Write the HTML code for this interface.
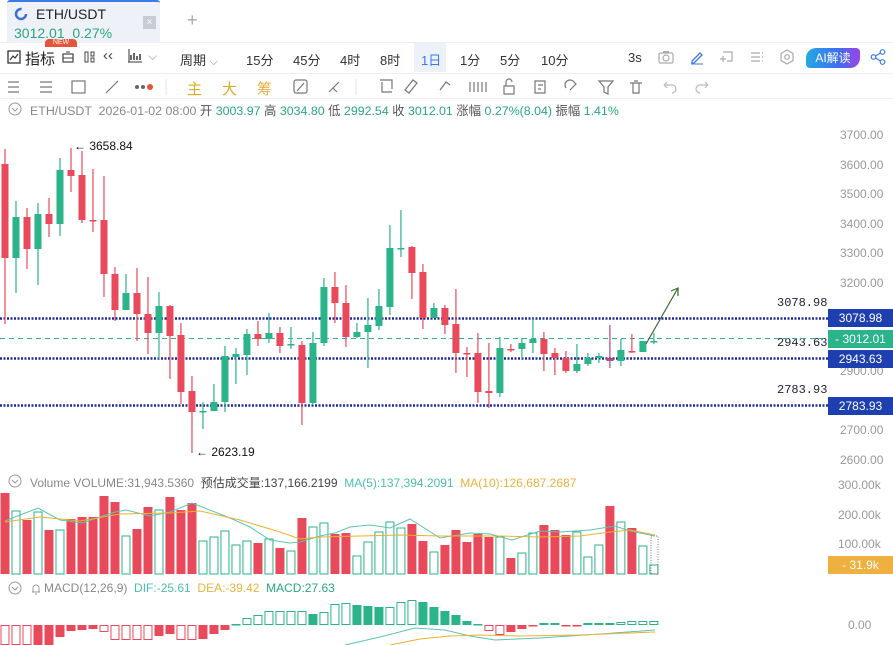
<!DOCTYPE html>
<html><head><meta charset="utf-8">
<style>
*{margin:0;padding:0;box-sizing:border-box}
body{width:893px;height:645px;overflow:hidden;background:#fff;font-family:"Liberation Sans","Noto Sans CJK SC",sans-serif;position:relative;color:#333}
.abs{position:absolute;white-space:nowrap}
.tab{position:absolute;left:7px;top:0;width:153px;height:42px;background:#eef2f8;border-top:2px solid #3b7be8;border-radius:3px 3px 0 0}
.t{font-size:13px;color:#333}
.g{color:#2aa77e}
.r{color:#e24a58}
.gr{color:#999}
.sm{font-size:12px}
</style></head><body>
<div class="tab"></div>
<svg class="abs" style="left:14px;top:7px" width="14" height="14" viewBox="0 0 14 14"><circle cx="7" cy="7" r="5" fill="none" stroke="#3b6fe0" stroke-width="2.5" stroke-dasharray="24 8"/></svg>
<div class="abs t" style="left:36px;top:6px;font-size:14px;color:#222">ETH/USDT</div>
<div class="abs" style="left:14px;top:25px;font-size:14px;color:#2aa77e">3012.01&nbsp; 0.27%</div>
<div class="abs" style="left:143px;top:16px;width:13px;height:13px;background:#c9ccd2;color:#fff;font-size:10px;text-align:center;line-height:13px">×</div>
<div class="abs" style="left:187px;top:10px;font-size:18px;color:#aaa;font-weight:300">+</div>
<div class="abs" style="left:0;top:42px;width:893px;height:1px;background:#eceef1"></div>
<div class="abs" style="left:45px;top:39px;width:32px;height:8px;background:#e8543a;border-radius:4px 4px 0 0;color:#fff;font-size:7px;text-align:center;line-height:8px">NEW</div>
<!-- toolbar 1 -->
<svg class="abs" style="left:7px;top:50px" width="14" height="14"><rect x="1" y="1" width="12" height="12" fill="none" stroke="#333" stroke-width="1.3"/><polyline points="3,10 6,6 8,8 11,4" fill="none" stroke="#333" stroke-width="1.2"/></svg>
<div class="abs" style="left:25px;top:48px;font-size:15px;color:#222">指标</div>
<svg class="abs" style="left:61px;top:50px" width="14" height="14"><rect x="2" y="4" width="10" height="8" fill="none" stroke="#444" stroke-width="1.2"/><line x1="2" y1="8" x2="12" y2="8" stroke="#444"/><line x1="5" y1="2" x2="9" y2="2" stroke="#444"/></svg>
<svg class="abs" style="left:84px;top:50px" width="12" height="14"><rect x="1" y="2" width="3" height="10" fill="none" stroke="#444"/><rect x="7" y="2" width="3" height="4" fill="none" stroke="#444"/><rect x="7" y="8" width="3" height="4" fill="none" stroke="#444"/></svg>
<div class="abs" style="left:103px;top:47px;font-size:15px;color:#444">‹‹</div>
<svg class="abs" style="left:127px;top:48px" width="16" height="16"><line x1="2" y1="1" x2="2" y2="14" stroke="#333"/><line x1="1" y1="14" x2="15" y2="14" stroke="#333"/><path d="M4 12V7M7 12V5M10 12V8M13 12V6" stroke="#333" stroke-width="1.5"/></svg>
<div class="abs gr" style="left:148px;top:49px;font-size:12px">⌵</div>
<div class="abs t" style="left:180px;top:50px">周期 <span style="color:#888;font-size:11px">⌵</span></div>
<div class="abs t" style="left:246px;top:50px">15分</div>
<div class="abs t" style="left:293px;top:50px">45分</div>
<div class="abs t" style="left:340px;top:50px">4时</div>
<div class="abs t" style="left:380px;top:50px">8时</div>
<div class="abs" style="left:414px;top:43px;width:32px;height:29px;background:#edf2f9"></div>
<div class="abs t" style="left:421px;top:50px;color:#3b7be8">1日</div>
<div class="abs t" style="left:460px;top:50px">1分</div>
<div class="abs t" style="left:500px;top:50px">5分</div>
<div class="abs t" style="left:541px;top:50px">10分</div>
<div class="abs t" style="left:628px;top:50px">3s</div>
<svg class="abs" style="left:658px;top:50px" width="16" height="14"><rect x="1" y="3" width="14" height="10" rx="1.5" fill="none" stroke="#aaa" stroke-width="1.2"/><circle cx="8" cy="8" r="3" fill="none" stroke="#aaa" stroke-width="1.2"/><rect x="5" y="1" width="6" height="2" fill="#aaa"/></svg>
<svg class="abs" style="left:689px;top:49px" width="16" height="16"><path d="M3 12L11 4l2 2-8 8H3z" fill="none" stroke="#3b7be8" stroke-width="1.3"/><line x1="2" y1="15" x2="14" y2="15" stroke="#3b7be8"/></svg>
<svg class="abs" style="left:719px;top:50px" width="14" height="14"><path d="M4 2h9v9H8M1 9h6M4 6v6" fill="none" stroke="#aaa" stroke-width="1.2"/></svg>
<svg class="abs" style="left:750px;top:51px" width="14" height="12"><path d="M1 2h9M1 6h9M1 10h9M12 2h1M12 6h1M12 10h1" stroke="#aaa" stroke-width="1.2"/></svg>
<svg class="abs" style="left:779px;top:49px" width="16" height="16"><polygon points="8,1 14,4.5 14,11.5 8,15 2,11.5 2,4.5" fill="none" stroke="#aaa" stroke-width="1.2"/><circle cx="8" cy="8" r="2.3" fill="none" stroke="#aaa" stroke-width="1.2"/></svg>
<div class="abs" style="left:806px;top:48px;width:54px;height:20px;border-radius:10px 4px 10px 4px;background:linear-gradient(90deg,#25a8e0,#3c6ef0 60%,#9d43e6);color:#fff;font-size:12px;text-align:center;line-height:20px">AI解读</div>
<svg class="abs" style="left:870px;top:49px" width="16" height="16"><circle cx="3.5" cy="8" r="2.3" fill="none" stroke="#3b7be8" stroke-width="1.2"/><circle cx="12.5" cy="3" r="2.3" fill="none" stroke="#3b7be8" stroke-width="1.2"/><circle cx="12.5" cy="13" r="2.3" fill="none" stroke="#3b7be8" stroke-width="1.2"/><path d="M5.5 7l5-3M5.5 9l5 3" stroke="#3b7be8" stroke-width="1.2"/></svg>
<div class="abs" style="left:0;top:73px;width:893px;height:1px;background:#eceef1"></div>
<!-- toolbar 2 -->
<svg class="abs" style="left:0;top:76px" width="893" height="22">
<g stroke="#777" stroke-width="1.2" fill="none">
<path d="M8 6h11M8 11h11M8 16h11"/><path d="M40 6h12M40 11h12M40 16h12"/>
<rect x="72" y="5" width="13" height="12"/>
<path d="M106 17l12-12"/>
<path d="M382 6v10h10M380 4h12v9"/><path d="M405 14l8-10 4 3-8 10z"/><path d="M440 14l6-8 4 3"/>
<path d="M470 6v10M474 6v10M478 6v10M482 6v10M486 6v10"/>
<path d="M504 10h10v8h-10zM506 10V6a3 3 0 0 1 6 0"/>
<path d="M535 5h10v12h-10zM538 9h5M538 13h3"/>
<path d="M566 12a5 5 0 0 1 8-6l2 2-6 6"/>
<path d="M599 5h14l-5 6v7l-4-2v-5z"/>
<path d="M630 7h12M633 7v10h6V7M634 5h4"/>
</g>
<g stroke="#bbb" stroke-width="1.2" fill="none"><path d="M664 9h8a4 4 0 0 1 0 8M664 9l3-3M664 9l3 3"/><path d="M708 9h-8a4 4 0 0 0 0 8M708 9l-3-3M708 9l-3 3"/></g>
<circle cx="137" cy="11" r="2" fill="#666"/><circle cx="143" cy="11" r="2" fill="#666"/><circle cx="150" cy="11" r="3" fill="#e8543a"/>
<line x1="166" y1="3" x2="166" y2="19" stroke="#e5e5e5"/><line x1="356" y1="3" x2="356" y2="19" stroke="#e5e5e5"/>
<rect x="294" y="4" width="13" height="13" rx="2" fill="none" stroke="#777" stroke-width="1.2"/><path d="M297 15l7-8" stroke="#777" stroke-width="1.2"/><path d="M329 16l10-10M333 12l4 4" stroke="#777" stroke-width="1.2"/>
</svg>
<div class="abs" style="left:187px;top:78px;font-size:15px;color:#d9ab2a">主</div>
<div class="abs" style="left:222px;top:78px;font-size:15px;color:#d9ab2a">大</div>
<div class="abs" style="left:257px;top:78px;font-size:15px;color:#e6b447">筹</div>
<div class="abs" style="left:0;top:98px;width:893px;height:1px;background:#eceef1"></div>
<!-- info row -->
<svg class="abs" style="left:8px;top:102px" width="14" height="14"><circle cx="7" cy="7" r="6" fill="none" stroke="#999"/><path d="M4 6l3 3 3-3" fill="none" stroke="#999"/></svg>
<div class="abs" style="left:30px;top:101px;color:#888;font-size:12.4px">ETH/USDT &nbsp;2026-01-02 08:00 <span style="color:#555">开</span> <span class="g">3003.97</span> <span style="color:#555">高</span> <span class="g">3034.80</span> <span style="color:#555">低</span> <span class="g">2992.54</span> <span style="color:#555">收</span> <span class="g">3012.01</span> <span style="color:#555">涨幅</span> <span class="g">0.27%(8.04)</span> <span style="color:#555">振幅</span> <span class="g">1.41%</span></div>
<!-- volume header -->
<svg class="abs" style="left:8px;top:474px" width="14" height="14"><circle cx="7" cy="7" r="6" fill="none" stroke="#999"/><path d="M4 6l3 3 3-3" fill="none" stroke="#999"/></svg>
<div class="abs sm" style="left:30px;top:474px;color:#888">Volume VOLUME:31,943.5360 &nbsp;<span style="color:#444">预估成交量:137,166.2199</span> &nbsp;<span style="color:#4cc0b0">MA(5):137,394.2091</span> &nbsp;<span style="color:#e8b53a">MA(10):126,687.2687</span></div>
<svg class="abs" style="left:8px;top:581px" width="14" height="14"><circle cx="7" cy="7" r="6" fill="none" stroke="#999"/><path d="M4 6l3 3 3-3" fill="none" stroke="#999"/></svg>
<svg class="abs" style="left:30px;top:582px" width="12" height="13"><path d="M2 10h8M3 10V6a3 3 0 0 1 6 0v4M5 12h2" fill="none" stroke="#999"/></svg>
<div class="abs sm" style="left:44px;top:581px;color:#888">MACD(12,26,9) &nbsp;<span style="color:#4cc0b0">DIF:-25.61</span> &nbsp;<span style="color:#e8b53a">DEA:-39.42</span> &nbsp;<span class="g">MACD:27.63</span></div>
<!-- axis labels -->
<div class="abs sm gr" style="left:840px;top:128px">3700.00</div>
<div class="abs sm gr" style="left:840px;top:158px">3600.00</div>
<div class="abs sm gr" style="left:840px;top:187px">3500.00</div>
<div class="abs sm gr" style="left:840px;top:217px">3400.00</div>
<div class="abs sm gr" style="left:840px;top:246px">3300.00</div>
<div class="abs sm gr" style="left:840px;top:276px">3200.00</div>
<div class="abs sm gr" style="left:840px;top:364px">2900.00</div>
<div class="abs sm gr" style="left:840px;top:423px">2700.00</div>
<div class="abs sm gr" style="left:840px;top:453px">2600.00</div>
<div class="abs sm gr" style="left:838px;top:478px">300.00k</div>
<div class="abs sm gr" style="left:838px;top:508px">200.00k</div>
<div class="abs sm gr" style="left:838px;top:537px">100.00k</div>
<div class="abs sm" style="left:828px;top:556px;width:65px;height:18px;background:#f0b040;color:#fff;line-height:18px;text-align:center">- 31.9k</div>
<div class="abs sm gr" style="left:848px;top:618px">0.00</div>
<div class="abs" style="left:828px;top:309px;width:65px;height:18px;background:#1e3fb0;color:#fff;font-size:12px;line-height:18px;text-align:center">3078.98</div>
<div class="abs" style="left:828px;top:330px;width:65px;height:18px;background:#2bb38a;color:#fff;font-size:12px;line-height:18px;text-align:center">- 3012.01</div>
<div class="abs" style="left:828px;top:350px;width:65px;height:18px;background:#1e3fb0;color:#fff;font-size:12px;line-height:18px;text-align:center">2943.63</div>
<div class="abs" style="left:828px;top:397px;width:65px;height:18px;background:#1e3fb0;color:#fff;font-size:12px;line-height:18px;text-align:center">2783.93</div>
<div class="abs" style="left:777px;top:296px;font-family:'Liberation Mono',monospace;font-size:12px;color:#223">3078.98</div>
<div class="abs" style="left:777px;top:336px;font-family:'Liberation Mono',monospace;font-size:12px;color:#223">2943.63</div>
<div class="abs" style="left:777px;top:383px;font-family:'Liberation Mono',monospace;font-size:12px;color:#223">2783.93</div>
<div class="abs" style="left:74px;top:139px;font-size:12px;color:#111">← 3658.84</div>
<div class="abs" style="left:196px;top:445px;font-size:12px;color:#111">← 2623.19</div>
<svg id="ch" class="abs" style="left:0;top:0" width="828" height="645"></svg>
<script>
var C=[[164,258,149,324,0],[258,217,201,293,1],[217,249,208,269,0],[249,214,203,285,1],[214,224,198,237,0],[224,170,158,236,1],[170,176,148,192,0],[175,220,151,223,0],[220,220,169,232,0],[220,274,176,297,0],[274,310,267,321,0],[310,293,274,310,1],[293,314,268,341,0],[314,333,277,354,0],[333,306,292,359,1],[306,336,305,379,0],[335,392,323,404,0],[391,412,376,453,0],[411,411,402,429,1],[411,402,384,411,1],[402,356,346,412,1],[357,354,348,384,1],[355,334,329,375,1],[334,339,321,346,0],[339,333,313,343,1],[333,346,327,353,0],[344,344,327,349,1],[345,403,341,425,0],[403,343,332,405,1],[343,287,278,346,1],[287,303,272,323,0],[303,337,285,347,0],[337,332,323,338,1],[332,325,298,368,1],[326,306,289,330,1],[307,248,225,315,1],[248,248,210,257,1],[247,273,246,299,0],[272,318,264,329,0],[318,308,303,318,1],[308,325,305,334,0],[324,353,289,373,0],[353,353,347,377,0],[353,392,333,403,0],[391,393,343,408,0],[393,348,337,397,1],[349,349,344,352,0],[349,343,338,359,1],[343,339,318,353,1],[339,354,332,371,0],[353,358,348,375,0],[358,371,351,373,0],[371,364,344,373,1],[364,358,353,366,1],[358,356,353,363,1],[358,361,325,368,0],[361,350,339,366,1],[351,351,334,353,0],[352,341,341,352,1],[341,341,333,344,1]];
var V=[493,511,520,512,530,530,519,517,517,496,502,536,529,507,510,497,510,503,541,537,531,545,541,543,539,548,551,518,527,523,534,533,556,542,532,522,528,524,541,552,545,530,542,534,537,537,558,553,533,525,530,535,532,557,545,506,522,528,546,565];
var M=[645,645,645,645,645,637,631,630,629,632,640,640,640,640,636,634,640,640,639,634,630,624,618,615,611,611,611,611,614,612,604,603,605,606,607,607,602,600,602,607,611,615,621,624,631,635,632,629,626,623,623,626,626,623,623,623,622,621,621,621];
var MH=[0,0,0,1,1,1,1,1,1,0,0,0,0,0,1,1,0,0,1,1,1,1,0,0,0,0,0,0,1,0,0,0,1,1,1,0,0,0,1,1,1,1,1,1,0,0,1,1,1,1,1,1,1,1,1,1,0,0,0,0];
var R='#e84a5b',G='#2bb38a',s='';
function X(i){return 5+i*10.998}
s+='<line x1="0" y1="318.5" x2="828" y2="318.5" stroke="#1e2a9a" stroke-width="2.5" stroke-dasharray="2 1.5"/>';
s+='<line x1="0" y1="358.5" x2="828" y2="358.5" stroke="#1e2a9a" stroke-width="2.5" stroke-dasharray="2 1.5"/>';
s+='<line x1="0" y1="405.5" x2="828" y2="405.5" stroke="#1e2a9a" stroke-width="2.5" stroke-dasharray="2 1.5"/>';
s+='<line x1="0" y1="338.5" x2="828" y2="338.5" stroke="#2bb38a" stroke-width="1" stroke-dasharray="5 4"/>';
C.forEach(function(c,i){var x=X(i),col=c[4]?G:R;if(i==55)col='#b04a80';var t=Math.min(c[0],c[1]),b=Math.max(c[0],c[1]);
s+='<line x1="'+x+'" y1="'+c[2]+'" x2="'+x+'" y2="'+c[3]+'" stroke="'+col+'" stroke-width="1.2"/>';
s+='<rect x="'+(x-3.5)+'" y="'+t+'" width="7" height="'+Math.max(b-t,1.5)+'" fill="'+col+'"/>';});
s+='<line x1="646" y1="344" x2="678" y2="288" stroke="#3a6a30" stroke-width="1.2"/><path d="M671 291L678 288 678 296" fill="none" stroke="#3a6a30" stroke-width="1.2"/>';
V.forEach(function(v,i){var x=X(i);if(C[i][4])s+='<rect x="'+(x-4)+'" y="'+v+'" width="8" height="'+(574-v)+'" fill="none" stroke="'+G+'" stroke-width="1"/>';else s+='<rect x="'+(x-4.5)+'" y="'+v+'" width="9" height="'+(574-v)+'" fill="'+R+'"/>';});
s+='<rect x="651" y="536" width="7" height="38" fill="none" stroke="#555" stroke-dasharray="1 1.5" stroke-width="0.8"/>';
s+='<polyline points="5,521 38,508 60,520 82,523 115,512 126,510 150,516 170,512 192,503 230,518 250,527 270,540 290,543 300,542 320,536 335,533 350,527 370,525 390,528 410,519 440,538 470,533 490,534 512,540 540,531 560,532 590,530 615,526 630,531 655,536" fill="none" stroke="#5cc4b4" stroke-width="1"/>';
s+='<polyline points="5,522 40,517 80,521 120,514 170,513 200,511 240,520 280,532 300,539 320,537 360,536 400,535 440,536 470,536 500,536 540,537 580,536 610,532 630,530 655,535" fill="none" stroke="#ecb130" stroke-width="1"/>';
M.forEach(function(m,i){var x=X(i),up=m<625,col=up?G:R,t=up?m:625,h=Math.max(Math.abs(m-625),1.5);
if(MH[i])s+='<rect x="'+(x-4.5)+'" y="'+t+'" width="9" height="'+h+'" fill="'+col+'"/>';else s+='<rect x="'+(x-4)+'" y="'+(t+0.5)+'" width="8" height="'+(h-1)+'" fill="none" stroke="'+col+'"/>';});
s+='<polyline points="345,645 380,637 415,628 445,630 470,636 495,640 540,638 600,634 655,630" fill="none" stroke="#5cc4b4" stroke-width="1"/>';
s+='<polyline points="390,645 420,639 450,636 480,635 520,636 580,635 655,632" fill="none" stroke="#ecb130" stroke-width="1"/>';
document.getElementById('ch').innerHTML=s;
</script>
</body></html>
